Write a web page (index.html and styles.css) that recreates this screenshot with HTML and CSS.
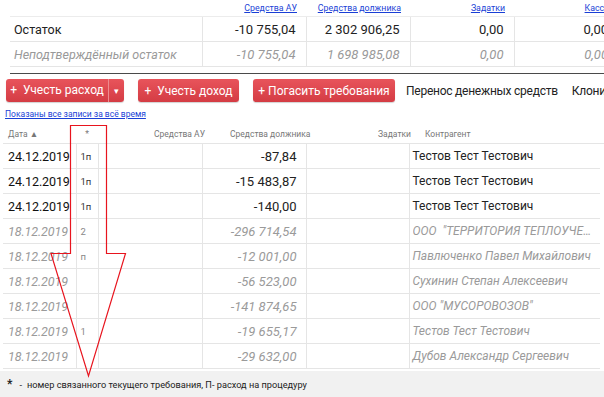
FILE: index.html
```html
<!DOCTYPE html>
<html lang="ru">
<head>
<meta charset="utf-8">
<link rel="stylesheet" href="styles.css">
</head>
<body>
<div class="page">
  <table class="summary">
    <colgroup><col class="c-label"><col class="c-num"><col class="c-num"><col class="c-num"><col class="c-num"></colgroup>
    <tr class="links">
      <th></th>
      <th><a href="#">Средства АУ</a></th>
      <th><a href="#">Средства должника</a></th>
      <th><a href="#">Задатки</a></th>
      <th><a href="#">Касса</a></th>
    </tr>
    <tr class="main">
      <td class="label">Остаток</td>
      <td>-10 755,04</td>
      <td>2 302 906,25</td>
      <td>0,00</td>
      <td>0,00</td>
    </tr>
    <tr class="unconf">
      <td class="label">Неподтверждённый остаток</td>
      <td>-10 755,04</td>
      <td>1 698 985,08</td>
      <td>0,00</td>
      <td>0,00</td>
    </tr>
  </table>
  <div class="divider"></div>
  <div class="toolbar">
    <div class="btn split"><span class="btn-main">+&nbsp; Учесть расход</span><span class="btn-caret">▾</span></div>
    <div class="btn b2">+&nbsp; Учесть доход</div>
    <div class="btn b3">+ Погасить требования</div>
    <span class="plain">Перенос денежных средств</span>
    <span class="plain">Клонировать</span>
  </div>
  <a class="shown" href="#">Показаны все записи за всё время</a>
  <div class="grid-head">
    <span class="h-date">Дата ▲</span>
    <span class="h-star">*</span>
    <span class="h-au">Средства АУ</span>
    <span class="h-dolg">Средства должника</span>
    <span class="h-zad">Задатки</span>
    <span class="h-kontr">Контрагент</span>
  </div>
  <table class="ops">
    <colgroup><col class="o-date"><col class="o-star"><col class="o-au"><col class="o-dolg"><col class="o-zad"><col class="o-kontr"></colgroup>
    <tr><td class="date">24.12.2019</td><td class="star">1п</td><td></td><td class="num">-87,84</td><td></td><td class="kontr">Тестов Тест Тестович</td></tr>
    <tr><td class="date">24.12.2019</td><td class="star">1п</td><td></td><td class="num">-15 483,87</td><td></td><td class="kontr">Тестов Тест Тестович</td></tr>
    <tr><td class="date">24.12.2019</td><td class="star">1п</td><td></td><td class="num">-140,00</td><td></td><td class="kontr">Тестов Тест Тестович</td></tr>
    <tr class="pend"><td class="date">18.12.2019</td><td class="star">2</td><td></td><td class="num">-296 714,54</td><td></td><td class="kontr"><div class="ell">ООО &nbsp;"ТЕРРИТОРИЯ ТЕПЛОУЧЕТА"</div></td></tr>
    <tr class="pend"><td class="date">18.12.2019</td><td class="star">п</td><td></td><td class="num">-12 001,00</td><td></td><td class="kontr">Павлюченко Павел Михайлович</td></tr>
    <tr class="pend"><td class="date">18.12.2019</td><td class="star"></td><td></td><td class="num">-56 523,00</td><td></td><td class="kontr">Сухинин Степан Алексеевич</td></tr>
    <tr class="pend"><td class="date">18.12.2019</td><td class="star"></td><td></td><td class="num">-141 874,65</td><td></td><td class="kontr">ООО "МУСОРОВОЗОВ"</td></tr>
    <tr class="pend"><td class="date">18.12.2019</td><td class="star">1</td><td></td><td class="num">-19 655,17</td><td></td><td class="kontr">Тестов Тест Тестович</td></tr>
    <tr class="pend"><td class="date">18.12.2019</td><td class="star"></td><td></td><td class="num">-29 632,00</td><td></td><td class="kontr">Дубов Александр Сергеевич</td></tr>
  </table>
  <div class="footer"><b class="ast">*</b><span class="dash">-</span>номер связанного текущего требования, П- расход на процедуру</div>
  <svg class="arrow" width="604" height="397" viewBox="0 0 604 397">
    <polygon points="70.5,125.5 106.5,125.5 106.5,253.5 125.5,253.5 88.5,376 51,253.5 70.5,253.5" fill="none" stroke="#e8141e" stroke-width="1.2"/>
  </svg>
</div>
</body>
</html>
```
FILE: styles.css
```css
html, body { margin: 0; padding: 0; }
body {
  width: 604px; height: 397px; overflow: hidden;
  font-family: Roboto, "Noto Sans", sans-serif;
  color: #222; background: #fff;
}
.page { position: relative; width: 604px; height: 397px; overflow: hidden; }

.summary { border-collapse: collapse; margin-left: 10px; table-layout: fixed; width: 608px; }
.c-label { width: 192px; }
.c-num { width: 104px; }
.summary th { height: 16px; padding: 0 9px 0 0; text-align: right; vertical-align: middle; font-weight: normal; font-size: 8.8px; line-height: 11px; border-bottom: 1px solid #ececec; }
.summary th a { color: #1a3fd6; text-decoration: underline; }
.summary td { height: 24px; padding: 0 10px 0 4px; text-align: right; font-size: 13px; border-bottom: 1px solid #e5e5e5; border-left: 1px solid #e5e5e5; white-space: nowrap; }
.summary td.label { text-align: left; border-left: none; padding-left: 4px; font-size: 12.5px; }
.summary .main td { color: #222; }
.summary .unconf td { color: #999; font-style: italic; }

.divider { height: 1px; background: #4a4a4a; margin: 6px 0 0 10px; }

.toolbar { display: flex; align-items: center; margin: 5px 0 0 6px; height: 23px; white-space: nowrap; }
.toolbar > * { flex-shrink: 0; }
.btn { height: 23px; box-sizing: border-box; display: flex; align-items: center; justify-content: center; margin-right: 14px; border-radius: 3px;
  background: linear-gradient(#e8545b, #d43c44); color: #fff; font-size: 12px; box-shadow: 0 1px 1px rgba(0,0,0,.18); }
.btn.split { justify-content: flex-start; }
.btn-main { height: 23px; line-height: 23px; width: 103px; text-align: center; box-sizing: border-box; border-right: 1px solid #ee8a8f; }
.btn-caret { width: 15px; text-align: center; font-size: 9px; }
.b2 { width: 101px; }
.b3 { width: 142px; margin-right: 11px; }
.plain { font-size: 12px; letter-spacing: -0.25px; color: #222; margin-right: 14px; }

.shown { display: block; margin: 6px 0 0 5px; font-size: 8.5px; line-height: 12px; color: #1a3fd6; text-decoration: underline; height: 12px; }

.grid-head { display: flex; align-items: center; height: 18px; padding-top: 3px; margin: 2px 0 0 3px; font-size: 8.5px; color: #777; white-space: nowrap; border-bottom: 1px solid #e5e5e5; }
.grid-head span { display: block; }
.h-date { width: 68px; padding-left: 5px; }
.h-star { width: 22px; text-align: center; }
.h-au { width: 107px; text-align: right; }
.h-dolg { width: 80px; margin-left: 25px; }
.h-zad { width: 101px; text-align: right; }
.h-kontr { margin-left: 14px; }

.ops { border-collapse: collapse; table-layout: fixed; margin-left: 3px; width: 597px; }
.o-date { width: 73px; } .o-star { width: 22px; } .o-au { width: 104px; } .o-dolg { width: 104px; } .o-zad { width: 103px; } .o-kontr { width: 191px; }
.ops td { height: 24px; padding: 0; border-bottom: 1px solid #e5e5e5; border-left: 1px solid #e5e5e5; white-space: nowrap; overflow: hidden; }
.ops td.date { border-left: none; padding-left: 5px; font-size: 12.5px; letter-spacing: -0.1px; color: #111; }
.ops td.star { font-size: 9.5px; padding-left: 4px; color: #333; }
.ops td.num { text-align: right; padding-right: 9px; font-size: 13px; color: #222; }
.ops td.kontr { padding-left: 3px; font-size: 12px; color: #222; }
.ops tr.pend td.date, .ops tr.pend td.num, .ops tr.pend td.kontr { color: #9a9a9a; font-style: italic; }
.ops tr.pend td.star { color: #888; }
.ell { overflow: hidden; text-overflow: ellipsis; width: 182px; }

.footer { position: absolute; left: 0; top: 371px; width: 604px; height: 26px; background: #f1f1f1; font-size: 9.2px; color: #222; line-height: 26px; padding-left: 7px; box-sizing: border-box; white-space: nowrap; }
.ast { font-size: 12px; }
.dash { margin: 0 5px 0 7px; }
.arrow { position: absolute; left: 0; top: 0; pointer-events: none; }
```
